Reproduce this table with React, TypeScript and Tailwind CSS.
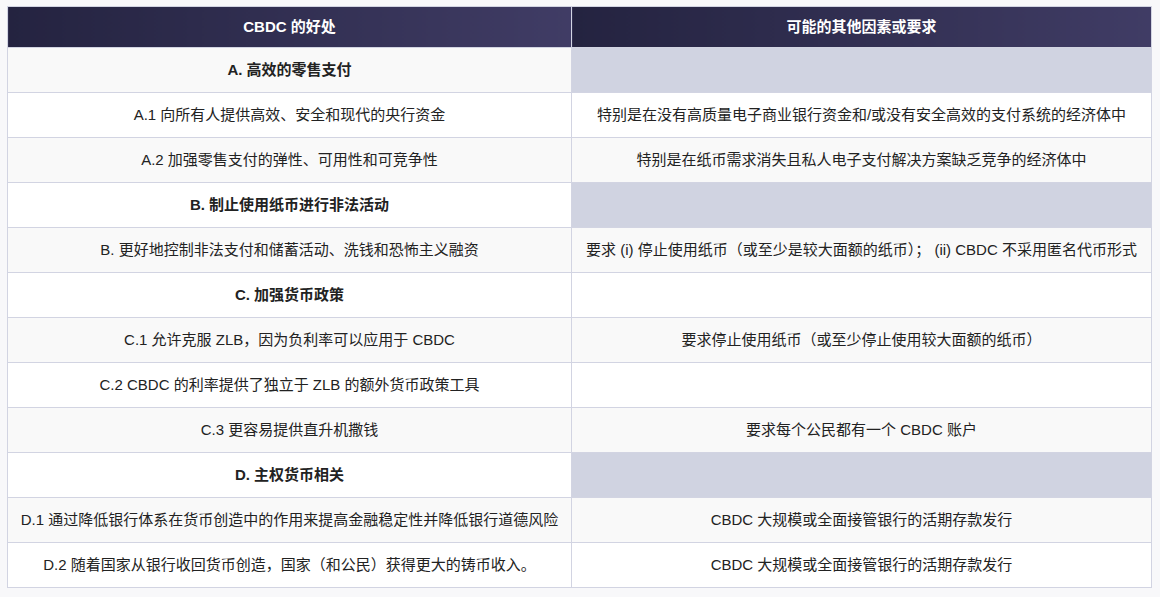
import React from "react";

type Row = { left: string; right: string; section?: boolean; shade?: boolean };

const rows: Row[] = [
  { left: "A. 高效的零售支付", right: "", section: true, shade: true },
  { left: "A.1 向所有人提供高效、安全和现代的央行资金", right: "特别是在没有高质量电子商业银行资金和/或没有安全高效的支付系统的经济体中" },
  { left: "A.2 加强零售支付的弹性、可用性和可竞争性", right: "特别是在纸币需求消失且私人电子支付解决方案缺乏竞争的经济体中" },
  { left: "B. 制止使用纸币进行非法活动", right: "", section: true, shade: true },
  { left: "B. 更好地控制非法支付和储蓄活动、洗钱和恐怖主义融资", right: "要求 (i) 停止使用纸币（或至少是较大面额的纸币）； (ii) CBDC 不采用匿名代币形式" },
  { left: "C. 加强货币政策", right: "", section: true },
  { left: "C.1 允许克服 ZLB，因为负利率可以应用于 CBDC", right: "要求停止使用纸币（或至少停止使用较大面额的纸币）" },
  { left: "C.2 CBDC 的利率提供了独立于 ZLB 的额外货币政策工具", right: "" },
  { left: "C.3 更容易提供直升机撒钱", right: "要求每个公民都有一个 CBDC 账户" },
  { left: "D. 主权货币相关", right: "", section: true, shade: true },
  { left: "D.1 通过降低银行体系在货币创造中的作用来提高金融稳定性并降低银行道德风险", right: "CBDC 大规模或全面接管银行的活期存款发行" },
  { left: "D.2 随着国家从银行收回货币创造，国家（和公民）获得更大的铸币收入。", right: "CBDC 大规模或全面接管银行的活期存款发行" },
];

export default function App() {
  return (
    <div
      className="min-h-[597px] w-[1160px] bg-[#f8f8fa] pt-[6px] pl-[7px]"
      style={{ fontFamily: '"Liberation Sans", Arial, "Noto Sans CJK SC", sans-serif' }}
    >
      <table className="w-[1145px] table-fixed border-collapse border border-[#d2d4e2] text-[15px] leading-5 text-[#222222]">
        <colgroup>
          <col className="w-[564px]" />
          <col />
        </colgroup>
        <thead>
          <tr>
            <th className="border border-[#d2d4e2] bg-linear-to-r from-[#242340] to-[#403c65] py-[10px] px-2 text-center font-bold text-white">
              CBDC 的好处
            </th>
            <th className="border border-[#d2d4e2] bg-linear-to-r from-[#242340] to-[#403c65] py-[10px] px-2 text-center font-bold text-white">
              可能的其他因素或要求
            </th>
          </tr>
        </thead>
        <tbody>
          {rows.map((r, i) => {
            const bg = i % 2 === 0 ? "bg-[#f9f9f9]" : "bg-white";
            return (
              <tr key={i} className={bg}>
                <td
                  className={
                    "border border-[#d2d4e2] py-3 px-1 text-center whitespace-nowrap " +
                    (r.section ? "font-bold" : "")
                  }
                >
                  {r.left}
                </td>
                <td
                  className={
                    "border border-[#d2d4e2] py-3 px-1 text-center whitespace-nowrap " +
                    (r.shade ? "bg-[#d0d3e1]" : "")
                  }
                >
                  {r.right}
                </td>
              </tr>
            );
          })}
        </tbody>
      </table>
    </div>
  );
}
